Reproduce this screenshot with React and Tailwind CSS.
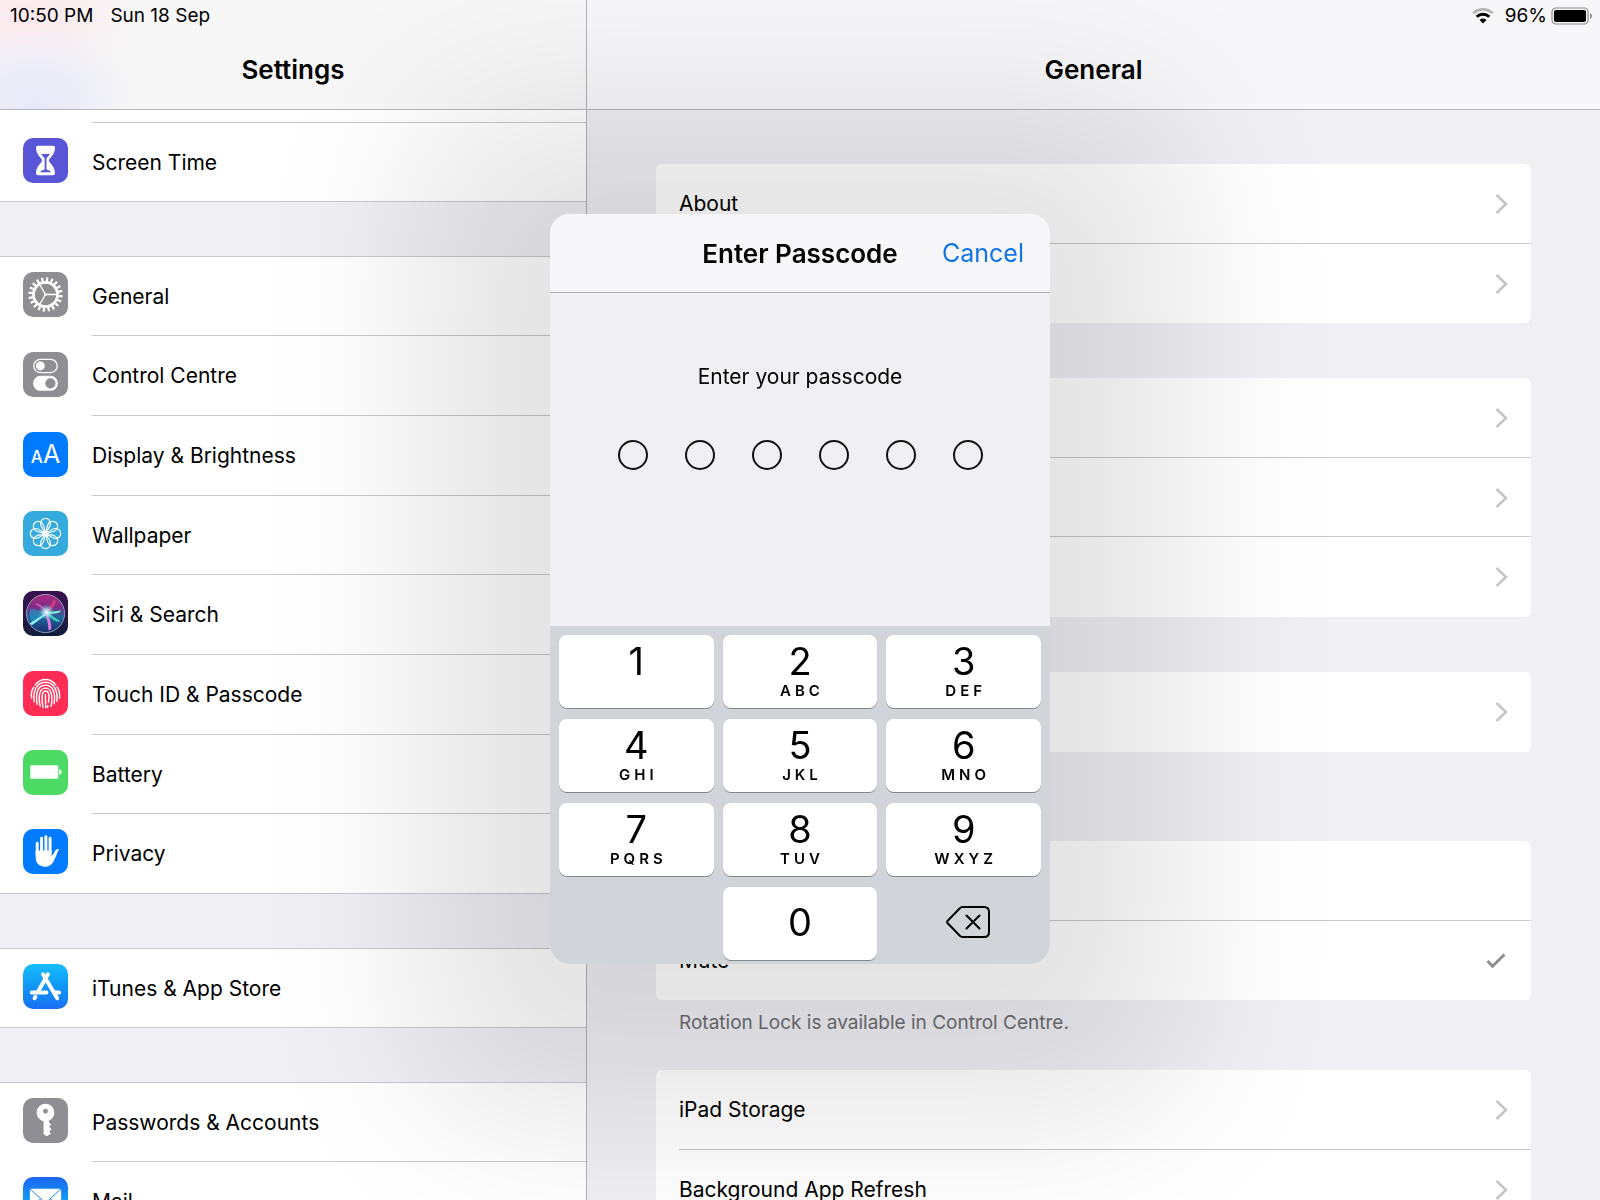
const sidebarGroups = [
    [{ label: 'Screen Time', icon: ScreenTimeIcon, bg: 'bg-[#5856d6]' }],
    [
        { label: 'General', icon: GearIcon, bg: 'bg-[#8e8e93]' },
        { label: 'Control Centre', icon: TogglesIcon, bg: 'bg-[#8e8e93]' },
        { label: 'Display & Brightness', icon: TextSizeIcon, bg: 'bg-[#007aff]' },
        { label: 'Wallpaper', icon: FlowerIcon, bg: 'bg-[#35aadc]' },
        { label: 'Siri & Search', icon: SiriIcon, bg: 'bg-linear-to-b from-[#3b0f4f] to-[#101c3c]' },
        { label: 'Touch ID & Passcode', icon: FingerprintIcon, bg: 'bg-[#ff2d55]' },
        { label: 'Battery', icon: BatteryIcon, bg: 'bg-[#4cd964]' },
        { label: 'Privacy', icon: HandIcon, bg: 'bg-[#007aff]' },
    ],
    [{ label: 'iTunes & App Store', icon: AppStoreIcon, bg: 'bg-linear-to-b from-[#19bdfc] to-[#1a6ef3]' }],
    [
        { label: 'Passwords & Accounts', icon: KeyIcon, bg: 'bg-[#8e8e93]' },
        { label: 'Mail', icon: MailIcon, bg: 'bg-linear-to-b from-[#1d65ee] to-[#1bc8fc]' },
    ],
];

const keys = [
    ['1', ''],
    ['2', 'ABC'],
    ['3', 'DEF'],
    ['4', 'GHI'],
    ['5', 'JKL'],
    ['6', 'MNO'],
    ['7', 'PQRS'],
    ['8', 'TUV'],
    ['9', 'WXYZ'],
];

function ScreenTimeIcon() {
    return (
        <svg viewBox="0 0 46 46" className="size-full">
            <path
                d="M15.500 8h15q2.500 0 2.200 2.800c-.6 5.700-3.300 7.700-5.600 10.700-.7 1-.7 2 0 3 2.300 3 5 5 5.600 10.700q.3 2.800-2.200 2.800h-15q-2.500 0-2.200-2.800c.6-5.700 3.300-7.700 5.600-10.700.7-1 .7-2 0-3-2.300-3-5-5-5.600-10.700Q13 8 15.500 8Z"
                fill="#fff"
            />
            <path d="M18.500 16.300h9.200L24 20.800v11.400q3.600.8 4.800 2.800H17.300q1.200-2 4.800-2.800V20.800Z" fill="#5856d6" />
        </svg>
    );
}

function GearIcon() {
    const teeth = Array.from({ length: 20 }, (_, i) => i * 18);
    return (
        <svg viewBox="0 0 46 46" className="size-full" fill="none" stroke="#fff">
            {teeth.map((angle) => (
                <path key={angle} d="M23 10V5.500" strokeWidth="2.300" transform={`rotate(${angle + 6} 23 23)`} />
            ))}
            <circle cx="23" cy="23" r="12.300" strokeWidth="2.800" />
            {[0, 120, 240].map((angle) => (
                <path key={angle} d="M23 23h12" strokeWidth="1.300" transform={`rotate(${angle} 23 23)`} />
            ))}
            <circle cx="23" cy="23" r="1.300" fill="#fff" stroke="none" />
        </svg>
    );
}

function TogglesIcon() {
    return (
        <svg viewBox="0 0 46 46" className="size-full">
            <rect x="11" y="7.500" width="24" height="13.500" rx="6.750" fill="none" stroke="#fff" strokeWidth="1.300" />
            <circle cx="17.700" cy="14.200" r="4.600" fill="#fff" />
            <rect x="10.300" y="24.300" width="25.400" height="15.400" rx="7.700" fill="#fff" />
            <circle cx="28" cy="32" r="5.200" fill="#8e8e93" />
        </svg>
    );
}

function TextSizeIcon() {
    return (
        <span className="flex size-full items-baseline justify-center pt-2 text-white">
            <span className="text-[17px] leading-7 font-medium">A</span>
            <span className="text-[25px] leading-7">A</span>
        </span>
    );
}

function FlowerIcon() {
    const petals = Array.from({ length: 8 }, (_, i) => i * 45);
    return (
        <svg viewBox="0 0 46 46" className="size-full" fill="none" stroke="#fff" strokeWidth="1.200">
            {petals.map((angle) => (
                <path
                    key={angle}
                    d="M23 22C19.500 18 17.900 15.500 17.900 12.600a5.100 5.100 0 0 1 10.200 0C28.100 15.500 26.500 18 23 22Z"
                    transform={`rotate(${angle} 23 23)`}
                />
            ))}
            <circle cx="23" cy="23" r="2.600" />
        </svg>
    );
}

function SiriIcon() {
    return (
        <svg viewBox="0 0 46 46" className="size-full">
            <defs>
                <linearGradient id="siri-orb" x1="0" y1="0" x2="0" y2="1">
                    <stop offset="0" stopColor="#b0267e" />
                    <stop offset=".35" stopColor="#7a2f88" />
                    <stop offset=".6" stopColor="#1f6a9c" />
                    <stop offset="1" stopColor="#1b2a6b" />
                </linearGradient>
                <radialGradient id="siri-glow">
                    <stop offset="0" stopColor="#fff" />
                    <stop offset=".4" stopColor="#bff4f4" stopOpacity=".7" />
                    <stop offset="1" stopColor="#4fd8e0" stopOpacity="0" />
                </radialGradient>
            </defs>
            <circle cx="23" cy="23" r="19.500" fill="url(#siri-orb)" stroke="#8f9fb8" strokeWidth="1" />
            <path d="M23 22 8 18c-2 5-1 11 1 14Z" fill="#22a8cf" opacity=".5" />
            <path d="M24 21 12 13q6-1 12 8Z" fill="#d060c0" opacity=".8" />
            <path d="M24 22 32 8q5 6-8 14Z" fill="#e43c7c" opacity=".8" />
            <path d="M23 22 39 20q0 4-16 3Z" fill="#7af0dc" />
            <path d="M23 21 38 31q-4 2-15-8Z" fill="#3fd2c4" />
            <path d="M24 22 7 33l2 2 15-11Z" fill="#8ff5f2" />
            <path d="M22 23q4 7 4 17l3-1q0-10-5-17Z" fill="#e07adc" />
            <circle cx="24" cy="21.500" r="8" fill="url(#siri-glow)" />
        </svg>
    );
}

function FingerprintIcon() {
    return (
        <svg viewBox="0 0 46 46" className="size-full" fill="none" stroke="#fff" strokeWidth="1.500" strokeLinecap="round">
            <path d="M12.500 14.200C15 10.800 18.500 8.600 23 8.600s8 2.200 10.500 5.600" />
            <path d="M8.800 27.500c-.7-4 .1-8 2.200-11M35 16.500c2.300 3.500 2.900 7 2.200 11.500" />
            <path d="M11.500 31.500c-1.600-10.500 2.500-20 11.500-20s13 9.500 11.500 19.500" />
            <path d="M14.500 34c-2-11 .5-19.500 8.500-19.500S33.500 23 31.700 33.500" />
            <path d="M17.500 36c-2.200-11-.5-18.500 5.500-18.500S30.500 25 28.800 36" />
            <path d="M20.500 37.200c-1.600-9-1.500-16.700 2.500-16.700s4 6 3 11.500M25.500 35.500l-.3 1.700" />
            <path d="M23 24c-.3 4.500.2 9 .3 13.500" />
        </svg>
    );
}

function BatteryIcon() {
    return (
        <svg viewBox="0 0 46 46" className="size-full" fill="#fff">
            <rect x="7.500" y="15.500" width="28.500" height="14" rx="1" />
            <path d="M37 19.500q2.600.8 2.600 3t-2.600 3Z" />
        </svg>
    );
}

function HandIcon() {
    return (
        <svg viewBox="0 0 46 46" className="size-full" fill="none" stroke="#fff" strokeLinecap="round" strokeLinejoin="round">
            <path d="M14.500 27V14.500M19 24V9.500M23.400 24V7.800M27.700 24V9.500" strokeWidth="3" />
            <path
                d="M13 22h16.200v5.500c1.500-1 2.400-3.200 3.700-5.200 1-1.500 2.400-2.300 3.900-1.500-2.300 4.200-3.500 9.200-6 13.200-2 3.100-4.600 4.500-8 4.500-6 0-9.800-3-9.800-9.500Z"
                fill="#fff"
                stroke="none"
            />
        </svg>
    );
}

function AppStoreIcon() {
    return (
        <svg viewBox="0 0 46 46" className="size-full" fill="none" stroke="#fff" strokeWidth="4" strokeLinecap="round">
            <path d="M25.500 10.500 15.700 27.500M12.700 33.500l-.9 1.600" />
            <path d="M20.500 10.500 35 35" />
            <path d="M9 29.200h15M32 29.200h5" />
        </svg>
    );
}

function KeyIcon() {
    return (
        <svg viewBox="0 0 46 46" className="size-full">
            <path
                fill="#fff"
                fillRule="evenodd"
                d="M23 6a9 9 0 0 1 3.500 17.300V25l2.300 2-2 2.500 2.300 2.500-2.300 2.500 1.800 2L24.300 39 21 37V23.800A9 9 0 0 1 23 6Zm0 5a2.500 2.500 0 1 0 0 5 2.500 2.500 0 0 0 0-5Z"
            />
        </svg>
    );
}

function MailIcon() {
    return (
        <svg viewBox="0 0 46 46" className="size-full">
            <rect x="7" y="12" width="32" height="22" rx="2" fill="#fff" />
            <path d="M7.500 12.500 20 24q3 2.500 6 0l12.500-11.500M7.500 33.500 18 22M38.500 33.500 28 22" fill="none" stroke="#1d86f4" strokeWidth="1" />
        </svg>
    );
}

function Chevron() {
    return (
        <svg viewBox="0 0 14 22" className="h-[22px] w-[14px]" fill="none" stroke="#c4c4c8" strokeWidth="2.500" aria-hidden="true">
            <path d="M1.500 2 11 11 1.500 20" />
        </svg>
    );
}

function Check() {
    return (
        <svg viewBox="0 0 20 16" className="mr-[3px] h-4 w-5" fill="none" stroke="#8e8e93" strokeWidth="3" aria-hidden="true">
            <path d="M1.500 8 6.500 13.200 18.500 1.500" />
        </svg>
    );
}

function StatusWifi() {
    return (
        <svg viewBox="0 0 22 16" className="mr-[11px] h-4 w-[22px]" fill="none" aria-hidden="true">
            <path d="M1.300 5.200a14 14 0 0 1 19.400 0" stroke="#b4b4b6" strokeWidth="2.800" />
            <path d="M4.700 8.800a9 9 0 0 1 12.600 0" stroke="#000" strokeWidth="2.800" />
            <path d="M11 15.500 7.500 12q3.500-2.800 7 0Z" fill="#000" />
        </svg>
    );
}

function StatusBattery() {
    return (
        <svg viewBox="0 0 42 18" className="h-[18px] w-[42px]" aria-hidden="true">
            <rect x="1" y="1" width="36" height="16" rx="4" fill="none" stroke="#8a8a8c" strokeWidth="1.200" />
            <rect x="3" y="3" width="32" height="12" rx="2" />
            <path d="M39 6q2 .8 2 3t-2 3Z" fill="#8a8a8c" />
        </svg>
    );
}

function SidebarRow({ item }) {
    const Icon = item.icon;
    return (
        <li className="group flex h-20 border-[#c8c7cc] last:border-b nth-[3n+1]:h-[79px]">
            <a href="#" className="flex flex-1 items-center pl-[23px]">
                <span className={`mb-1 size-[45px] overflow-hidden rounded-[10px] ${item.bg}`}>
                    <Icon />
                </span>
                <span className="ml-6 flex h-full flex-1 items-center border-b border-[#c8c7cc] pt-px group-last:border-b-0">
                    {item.label}
                </span>
            </a>
        </li>
    );
}

function DetailRow({ label, checked }) {
    return (
        <li className="group flex h-20 pl-[23px] nth-[3n+2]:h-[79px]">
            <a href="#" aria-label={label || 'Option'} className="flex flex-1 items-center justify-between border-b border-[#c8c7cc] pt-px pr-[22px] group-last:border-transparent">
                <span>{label}</span>
                {checked === undefined && <Chevron />}
                {checked && <Check />}
            </a>
        </li>
    );
}

function Card({ children }) {
    return <ul className="rounded-md bg-white">{children}</ul>;
}

function PasscodeDialog() {
    return (
        <div className="pointer-events-none fixed inset-0 flex items-start justify-center pt-[214px]">
            <div
                role="dialog"
                aria-label="Enter Passcode"
                className="pointer-events-auto w-[500px] overflow-hidden rounded-[20px] bg-[#efeff4] shadow-[0_20px_170px_130px_rgba(0,0,0,0.11)]"
            >
                <div className="grid h-[79px] grid-cols-[1fr_auto_1fr] items-center border-b border-[#b0b0b5] bg-[#f7f7f9] px-[26px] pt-px">
                    <h2 className="col-start-2 text-[26px] font-semibold">Enter Passcode</h2>
                    <button className="justify-self-end text-[25px] text-[#1273e6]">Cancel</button>
                </div>

                <div className="flex h-[333px] flex-col items-center pt-[68px]">
                    <p className="leading-8">Enter your passcode</p>
                    <div className="mt-[47px] flex gap-[37px]">
                        {[1, 2, 3, 4, 5, 6].map((n) => (
                            <span key={n} className="size-[30px] rounded-full border-2 border-[#111]" />
                        ))}
                    </div>
                </div>

                <div className="grid grid-cols-3 gap-x-[9px] gap-y-[11px] bg-[#d1d5da] px-[9px] pt-[9px] pb-1">
                    {keys.map(([digit, letters]) => (
                        <button key={digit} className="flex h-[73px] flex-col items-center rounded-lg bg-white pt-[6px] shadow-[0_1px_0_#85878b]">
                            <span className="text-[38px] leading-10">{digit}</span>
                            <span className="pl-1 text-[15px] leading-5 font-semibold tracking-[4px]">{letters}</span>
                        </button>
                    ))}
                    <button className="col-start-2 h-[73px] rounded-lg bg-white pb-1 text-[38px] leading-10 shadow-[0_1px_0_#85878b]">0</button>
                    <button aria-label="Delete" className="flex h-[73px] items-center justify-center pb-1 pl-2">
                        <svg viewBox="0 0 44 32" className="h-8 w-11" fill="none" stroke="#000" strokeWidth="2" strokeLinejoin="round">
                            <path d="M16.500 1H38q5 0 5 5v20q0 5-5 5H16.500q-1.500 0-2.700-1.200L1.700 17.300q-1.200-1.300 0-2.600L13.800 2.200Q15 1 16.500 1Z" />
                            <path d="m20.500 9.500 13 13m0-13-13 13" strokeLinecap="round" />
                        </svg>
                    </button>
                </div>
            </div>
        </div>
    );
}

export default function App() {
    return (
        <div className="flex h-screen overflow-hidden bg-[#efeff4] font-[Inter,sans-serif] text-[21px] text-black">
            <aside className="flex w-[587px] shrink-0 flex-col border-r border-[#b2b2b6]">
                <header className="h-[110px] shrink-0 border-b border-[#b9b9bd] bg-[#f7f7f7] bg-[radial-gradient(ellipse_100px_75px_at_36px_100px,#e9e9f8_0,#ececf8_40%,transparent_100%),radial-gradient(ellipse_110px_70px_at_30px_16px,#fbe8ec_0,transparent_100%)] text-center">
                    <div className="flex h-8 items-center gap-[17px] pl-[10px] text-[19px]">
                        <span>10:50 PM</span>
                        <span>Sun 18 Sep</span>
                    </div>
                    <h1 className="pt-5 text-[26px] leading-9 font-semibold">Settings</h1>
                </header>
                <nav className="flex flex-col gap-[54px] overflow-hidden">
                    {sidebarGroups.map((group, i) => (
                        <div key={i} className="border-t border-[#c8c7cc] bg-white first:border-t-0">
                            {i === 0 && <div className="ml-[92px] h-[13px] border-b border-[#c8c7cc]" />}
                            <ul>
                                {group.map((item) => (
                                    <SidebarRow key={item.label} item={item} />
                                ))}
                            </ul>
                        </div>
                    ))}
                </nav>
            </aside>

            <main className="flex flex-1 flex-col">
                <header className="h-[110px] shrink-0 border-b border-[#b9b9bd] bg-[#f7f7f9] text-center">
                    <div className="flex h-8 items-center justify-end pr-[7px] text-[19px]">
                        <StatusWifi />
                        <span className="mr-1">96%</span>
                        <StatusBattery />
                    </div>
                    <h1 className="pt-5 text-[26px] leading-9 font-semibold">General</h1>
                </header>
                <div className="flex flex-col gap-[55px] overflow-hidden px-[69px] pt-[54px]">
                    <Card>
                        <DetailRow label="About" />
                        <DetailRow />
                    </Card>
                    <Card>
                        <DetailRow />
                        <DetailRow />
                        <DetailRow />
                    </Card>
                    <Card>
                        <DetailRow />
                    </Card>
                    <section className="pt-[34px]">
                        <Card>
                            <DetailRow checked={false} />
                            <DetailRow label="Mute" checked />
                        </Card>
                        <p className="-mb-[22px] pt-[9px] pl-[23px] text-[19px] leading-7 text-[#6d6d72]">Rotation Lock is available in Control Centre.</p>
                    </section>
                    <Card>
                        <DetailRow label="iPad Storage" />
                        <DetailRow label="Background App Refresh" />
                    </Card>
                </div>
            </main>

            <PasscodeDialog />
        </div>
    );
}
